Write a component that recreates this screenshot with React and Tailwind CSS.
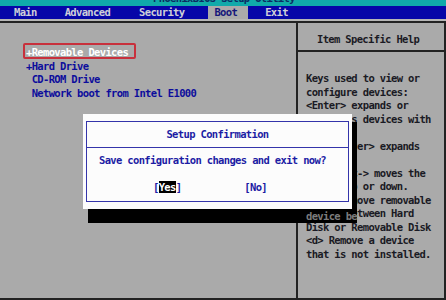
// App.jsx - BIOS setup screen with confirmation dialog
import React from 'react';

const helpLines = [
  'Keys used to view or',
  'configure devices:',
  '<Enter> expands or',
  'collapses devices with',
  'a + or -',
  '<Ctrl+Enter> expands',
  'all',
  '<+> and <-> moves the',
  'device up or down.',
  '<n> May move removable',
  'device between Hard',
  'Disk or Removable Disk',
  '<d> Remove a device',
  'that is not installed.',
];

const bootItems = ['+Hard Drive', ' CD-ROM Drive', ' Network boot from Intel E1000'];

function MenuBar() {
  return (
    <div className="h-[13px] bg-[#0606a8] flex items-center pl-[14px] text-[#cfcfd8]">
      <span>Main</span>
      <span className="ml-[28px]">Advanced</span>
      <span className="ml-[29px]">Security</span>
      <span className="ml-[24px] h-full flex items-center pl-[6px] pr-[11px] bg-[#aaaaaa] text-[#16167a]">Boot</span>
      <span className="ml-[17px]">Exit</span>
    </div>
  );
}

function Dialog() {
  return (
    <>
      {/* shadow */}
      <div className="absolute left-[88px] top-[122px] w-[269px] h-[101px] bg-black flex flex-col justify-end">
        <div className="h-[14px] pl-[218px] pt-[1px] text-[#7c7c7c] whitespace-pre">device be</div>
      </div>
      <div className="absolute left-[83px] top-[114px] w-[269px] h-[95px] bg-[#fcfcfc] px-[3px] py-[7px]">
        <div className="h-full border border-[#3434aa] flex flex-col text-[#1c1ca4]">
          <div className="h-[26px] border-b border-[#3434aa] flex items-center justify-center">
            Setup Confirmation
          </div>
          <div className="pt-[6px] pl-[12px] whitespace-pre">Save configuration changes and exit now?</div>
          <div className="mt-[13.5px] pl-[66px] flex whitespace-pre">
            <span>[<span className="bg-black text-white">Yes</span>]</span>
            <span className="ml-[63px]">[No]</span>
          </div>
        </div>
      </div>
    </>
  );
}

export default function App() {
  return (
    <div className="relative w-[446px] h-[300px] overflow-hidden bg-[#aaaaaa] font-['DejaVu_Sans_Mono',monospace] font-bold text-[10.5px] tracking-[-0.65px] leading-[13.5px]">
      {/* title bar, mostly cut off */}
      <div className="h-[6px] bg-[#10aaaa] overflow-hidden flex justify-center">
        <div className="-mt-[8px] pl-[2px] text-[#0c2c64] whitespace-pre">PhoenixBIOS Setup Utility</div>
      </div>
      <MenuBar />
      <div className="h-[2px] bg-[#b6b6b6]" />

      <div className="h-[279px] border-t-2 border-r-2 border-b-2 border-[#222222] flex">
        {/* left: boot order */}
        <div className="w-[298px] border-r-2 border-[#222222] pt-[23px] pl-[26px] text-[#0d0d9c] whitespace-pre">
          <div>
            <span className="relative text-white">
              +Removable Devices
              <span className="absolute -left-[3px] -right-[8px] -top-[3px] -bottom-[1px] border-2 border-[#c8303c] rounded-[2px]" />
            </span>
          </div>
          {bootItems.map((item) => (
            <div key={item}>{item}</div>
          ))}
        </div>

        {/* right: help */}
        <div className="flex-1 text-[#1a1a24]">
          <div className="h-[29px] border-b-2 border-[#222222] pt-[10px] pl-[19px] whitespace-pre">
            Item Specific Help
          </div>
          <div className="pt-[20px] pl-[8px] whitespace-pre">
            {helpLines.map((line) => (
              <div key={line}>{line}</div>
            ))}
          </div>
        </div>
      </div>

      <Dialog />
    </div>
  );
}
